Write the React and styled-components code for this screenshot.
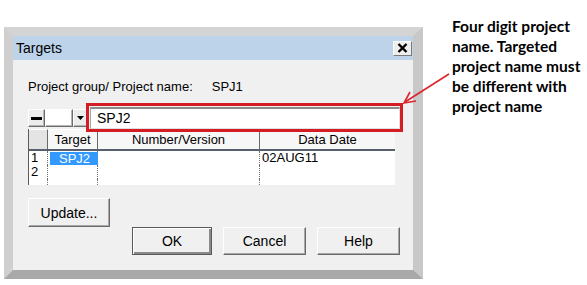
import React from 'react';
import styled, { createGlobalStyle } from 'styled-components';

const GlobalStyle = createGlobalStyle`
  html, body {
    margin: 0;
    padding: 0;
    background: #ffffff;
  }
  body {
    font-family: "Liberation Sans", Arial, sans-serif;
    color: #000;
  }
`;

const Page = styled.div`
  position: relative;
  width: 587px;
  height: 285px;
  display: flex;
  align-items: flex-start;
  padding-left: 4px;
  box-sizing: border-box;
  overflow: hidden;
`;

const Dialog = styled.div`
  margin-top: 27px;
  width: 419px;
  box-sizing: border-box;
  border-style: solid;
  border-width: 9px 10px 9px 9px;
  border-color: #d4d4d4 #c8c8c8 #a9a9a9 #cfcfcf;
  background: #f0f0f0;
`;

const TitleBar = styled.div`
  height: 24px;
  background: #bcd3ea;
  display: flex;
  align-items: center;
  justify-content: space-between;
  padding: 0 1px 0 3px;
`;

const Title = styled.span`
  font-size: 14px;
  color: #000;
`;

const CloseButton = styled.div`
  width: 19px;
  height: 15px;
  box-sizing: border-box;
  background: #eeeeee;
  border: 1px solid;
  border-color: #ffffff #7a7a7a #7a7a7a #ffffff;
  display: flex;
  align-items: center;
  justify-content: center;
`;

const Body = styled.div`
  padding: 19px 13px 15px 15px;
  display: flex;
  flex-direction: column;
`;

const InfoRow = styled.div`
  display: flex;
  font-size: 13px;
  line-height: 16px;
  gap: 19px;
`;

const Toolbar = styled.div`
  margin-top: 12px;
  height: 22px;
  display: flex;
  align-items: stretch;
`;

const ToolButton = styled.div`
  width: ${(p) => p.$w}px;
  margin: 2px 0;
  box-sizing: border-box;
  background: ${(p) => (p.$blank ? '#ffffff' : '#ececec')};
  border: 1px solid;
  border-color: #ffffff #6e6e6e #6e6e6e #ffffff;
  box-shadow: inset -1px -1px 0 #b5b5b5;
  display: flex;
  align-items: center;
  justify-content: center;
`;

const InputWrap = styled.div`
  position: relative;
  flex: 1;
  margin-left: 2px;
`;

const TextBox = styled.div`
  height: 100%;
  box-sizing: border-box;
  background: #fff;
  border-top: 2px solid #8c8c8c;
  border-left: 1px solid #a5a5a5;
  border-right: 1px solid #e0e0e0;
  border-bottom: 1px solid #e0e0e0;
  font-size: 14px;
  line-height: 19px;
  padding-left: 6px;
`;

const Highlight = styled.div`
  position: absolute;
  top: -4px;
  left: -4px;
  right: -3px;
  bottom: -3px;
  border: 3px solid #d41c24;
  pointer-events: none;
`;

const Table = styled.div`
  width: 367px;
  height: 56px;
  background: #fff;
  border-left: 1px solid #5a5a5a;
  box-sizing: border-box;
  display: flex;
  flex-direction: column;
  font-size: 13px;
`;

const HeaderRow = styled.div`
  display: grid;
  grid-template-columns: 19px 50px 162px 1fr;
  height: 20px;
  background: #f0f0f0;
  border-bottom: 2px solid #55606c;
`;

const HeaderCell = styled.div`
  display: flex;
  align-items: center;
  justify-content: center;
  border-right: 1px solid #6a6a6a;
  border-top: 1px solid #ffffff;
  background: ${(p) => (p.$corner ? '#e4e4e4' : '#f7f7f7')};
  &:last-child {
    border-right: none;
  }
`;

const DataRow = styled.div`
  display: grid;
  grid-template-columns: 19px 50px 162px 1fr;
  height: 14px;
  line-height: 14px;
`;

const DataCell = styled.div`
  border-right: 1px dotted #707070;
  padding-left: 2px;
  display: flex;
  align-items: center;
  &:last-child {
    border-right: none;
  }
`;

const Selected = styled.span`
  background: #3399ff;
  color: #fff;
  padding: 0 8px 0 9px;
  line-height: 13px;
`;

const FillRow = styled.div`
  flex: 1;
  display: grid;
  grid-template-columns: 19px 50px 162px 1fr;
`;

const WinButton = styled.div`
  width: ${(p) => p.$w}px;
  height: ${(p) => p.$h}px;
  box-sizing: border-box;
  background: #f0f0f0;
  font-size: 14px;
  display: flex;
  align-items: center;
  justify-content: center;
  border: 1px solid;
  border-color: ${(p) =>
    p.$default ? '#5a5a5a' : '#ffffff #6a6a6a #6a6a6a #ffffff'};
  box-shadow: ${(p) =>
    p.$default
      ? 'inset 1px 1px 0 #ffffff, inset -2px -2px 0 #8a8a8a'
      : 'inset -1px -1px 0 #a8a8a8'};
`;

const UpdateRow = styled.div`
  margin-top: 13px;
  display: flex;
`;

const ButtonRow = styled.div`
  display: flex;
  justify-content: flex-end;
  gap: 11px;
`;

const Note = styled.div`
  margin-left: 29px;
  margin-top: 16px;
  font-family: Lato, "Open Sans", sans-serif;
  font-weight: 700;
  font-size: 15.5px;
  line-height: 20px;
  color: #000;
  white-space: nowrap;
`;

const ArrowSvg = styled.svg`
  position: absolute;
  left: 0;
  top: 0;
  pointer-events: none;
`;

function CloseIcon() {
  return (
    <svg width="11" height="10" viewBox="0 0 11 10">
      <path d="M1.5 1 L9.5 9 M9.5 1 L1.5 9" stroke="#000" strokeWidth="2.4" />
    </svg>
  );
}

function Targets() {
  return (
    <Dialog>
      <TitleBar>
        <Title>Targets</Title>
        <CloseButton>
          <CloseIcon />
        </CloseButton>
      </TitleBar>
      <Body>
        <InfoRow>
          <span>Project group/ Project name:</span>
          <span>SPJ1</span>
        </InfoRow>
        <Toolbar>
          <ToolButton $w={17}>
            <svg width="11" height="3" viewBox="0 0 11 3">
              <rect width="11" height="3" fill="#000" />
            </svg>
          </ToolButton>
          <ToolButton $w={28} $blank />
          <ToolButton $w={15}>
            <svg width="7" height="4" viewBox="0 0 7 4">
              <path d="M0 0 H7 L3.5 4 Z" fill="#000" />
            </svg>
          </ToolButton>
          <InputWrap>
            <TextBox>SPJ2</TextBox>
            <Highlight />
          </InputWrap>
        </Toolbar>
        <Table>
          <HeaderRow>
            <HeaderCell $corner />
            <HeaderCell>Target</HeaderCell>
            <HeaderCell>Number/Version</HeaderCell>
            <HeaderCell>Data Date</HeaderCell>
          </HeaderRow>
          <DataRow>
            <DataCell>1</DataCell>
            <DataCell>
              <Selected>SPJ2</Selected>
            </DataCell>
            <DataCell />
            <DataCell>02AUG11</DataCell>
          </DataRow>
          <DataRow>
            <DataCell>2</DataCell>
            <DataCell />
            <DataCell />
            <DataCell />
          </DataRow>
          <FillRow>
            <DataCell />
            <DataCell />
            <DataCell />
            <DataCell />
          </FillRow>
        </Table>
        <UpdateRow>
          <WinButton $w={82} $h={29}>Update...</WinButton>
        </UpdateRow>
        <ButtonRow>
          <WinButton $w={80} $h={28} $default>
            OK
          </WinButton>
          <WinButton $w={83} $h={28}>Cancel</WinButton>
          <WinButton $w={83} $h={28}>Help</WinButton>
        </ButtonRow>
      </Body>
    </Dialog>
  );
}

export default function App() {
  return (
    <>
      <GlobalStyle />
      <Page>
        <Targets />
        <Note>
          Four digit project
          <br />
          name. Targeted
          <br />
          project name must
          <br />
          be different with
          <br />
          project name
        </Note>
        <ArrowSvg width="587" height="285" viewBox="0 0 587 285">
          <path d="M449 74 L405 102" stroke="#d9262c" strokeWidth="1.6" fill="none" />
          <path d="M410 92 L404 103 L416 101" stroke="#d9262c" strokeWidth="1.6" fill="none" />
        </ArrowSvg>
      </Page>
    </>
  );
}
